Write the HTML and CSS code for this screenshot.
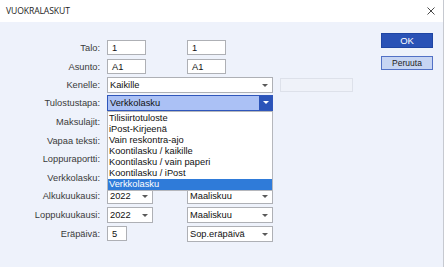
FILE: index.html
```html
<!DOCTYPE html>
<html lang="fi">
<head>
  <meta charset="UTF-8" />
  <title>Vuokralaskut</title>
  <link rel="stylesheet" href="styles.css">
</head>
<body>
  <div class="window">
    <header class="titlebar">
      <span class="title">VUOKRALASKUT</span>
      <svg class="close" viewBox="0 0 8 8"><path d="M0.5 0.5L7.5 7.5M7.5 0.5L0.5 7.5"/></svg>
    </header>

    <div class="content">
      <form class="form">
        <label class="lbl r1">Talo:</label>
        <div class="field input w-short col-a r1">1</div>
        <div class="field input w-short col-b r1">1</div>

        <label class="lbl r2">Asunto:</label>
        <div class="field input w-short col-a r2">A1</div>
        <div class="field input w-short col-b r2">A1</div>

        <label class="lbl r3">Kenelle:</label>
        <div class="field select col-wide r3">Kaikille<span class="arrow"></span></div>
        <div class="field disabled col-c r3"></div>

        <label class="lbl r4">Tulostustapa:</label>
        <div class="field select active col-wide r4">Verkkolasku<span class="arrow-box"><span class="arrow"></span></span>
          <ul class="dropdown">
            <li>Tilisiirtotuloste</li>
            <li>iPost-Kirjeenä</li>
            <li>Vain reskontra-ajo</li>
            <li>Koontilasku / kaikille</li>
            <li>Koontilasku / vain paperi</li>
            <li>Koontilasku / iPost</li>
            <li class="selected">Verkkolasku</li>
          </ul>
        </div>

        <label class="lbl r5">Maksulajit:</label>
        <label class="lbl r6">Vapaa teksti:</label>
        <label class="lbl r7">Loppuraportti:</label>
        <label class="lbl r8">Verkkolasku:</label>

        <label class="lbl r9">Alkukuukausi:</label>
        <div class="field select w-year col-a r9">2022<span class="arrow"></span></div>
        <div class="field select col-b r9">Maaliskuu<span class="arrow"></span></div>

        <label class="lbl r10">Loppukuukausi:</label>
        <div class="field select w-year col-a r10">2022<span class="arrow"></span></div>
        <div class="field select col-b r10">Maaliskuu<span class="arrow"></span></div>

        <label class="lbl r11">Eräpäivä:</label>
        <div class="field input w-day col-a r11">5</div>
        <div class="field select col-b r11">Sop.eräpäivä<span class="arrow"></span></div>
      </form>

      <div class="actions">
        <button class="btn btn-ok">OK</button>
        <button class="btn btn-cancel">Peruuta</button>
      </div>
    </div>
  </div>
</body>
</html>
```

FILE: styles.css
```css
* { margin: 0; padding: 0; box-sizing: border-box; }
body {
  font-family: "Liberation Sans", Arial, sans-serif;
  font-size: 9.3px;
  color: #333;
  background: #eef2fb;
}
.window {
  width: 444px;
  height: 267px;
  background: #eef2fb;
  border-right: 1px solid #c6c9d0;
  display: flex;
  flex-direction: column;
}
.titlebar {
  height: 22px;
  background: #fff;
  display: flex;
  align-items: center;
  justify-content: space-between;
  padding: 0 8px 1px 6px;
}
.title {
  font-family: "Open Sans", "Noto Sans", sans-serif;
  font-size: 8.6px;
  color: #222;
  letter-spacing: -0.1px;
}
.close {
  width: 8px;
  height: 8px;
  stroke: #333;
  stroke-width: 0.9;
  fill: none;
}
.content {
  flex: 1;
  display: flex;
}
.form {
  display: grid;
  grid-template-columns: 100px 7px 80px 86px 7px 73px;
  grid-template-rows: 19px 19px 18px 18px 19px 19px 18px 19px 18px 19px 19px;
  margin-top: 16px;
  align-content: start;
}
.r1 { grid-row: 1; } .r2 { grid-row: 2; } .r3 { grid-row: 3; }
.r4 { grid-row: 4; } .r5 { grid-row: 5; } .r6 { grid-row: 6; }
.r7 { grid-row: 7; } .r8 { grid-row: 8; } .r9 { grid-row: 9; }
.r10 { grid-row: 10; } .r11 { grid-row: 11; }
.lbl {
  grid-column: 1;
  align-self: center;
  text-align: right;
  color: #3a3a3a;
}
.col-a { grid-column: 3; }
.col-b { grid-column: 4; }
.col-wide { grid-column: 3 / span 2; }
.col-c { grid-column: 6; }

.field {
  align-self: center;
  background: #fff;
  border: 1px solid #aeb0b5;
  color: #111;
  display: flex;
  align-items: center;
  position: relative;
  white-space: nowrap;
}
.input { height: 15px; padding-left: 4px; }
.select { height: 16px; padding-left: 2px; }
.w-short { width: 39px; }
.w-year { width: 46px; }
.w-day { width: 20px; }
.disabled {
  height: 14px;
  background: #eff2f9;
  border-color: #dde1ea;
}
.arrow {
  position: absolute;
  right: 4px;
  top: 6px;
  width: 0;
  height: 0;
  border-left: 3px solid transparent;
  border-right: 3px solid transparent;
  border-top: 3px solid #5a5a5a;
}
.select.active {
  background: #abc1f5;
  border-color: #2f56bb;
}
.arrow-box {
  position: absolute;
  right: 0;
  top: 0;
  width: 13px;
  height: 14px;
  background: #2b54b9;
}
.arrow-box .arrow {
  right: 3px;
  top: 5px;
  border-top-color: #fff;
}
.dropdown {
  list-style: none;
  position: absolute;
  z-index: 2;
  left: -1px;
  right: -1px;
  top: 15px;
  background: #fff;
  border: 1px solid #b5b7bc;
  padding-top: 1px;
}
.dropdown li {
  height: 11px;
  line-height: 11px;
  padding-left: 1px;
  color: #111;
}
.dropdown li.selected {
  background: #2f7bd9;
  color: #fff;
}
.actions {
  margin-left: auto;
  margin-right: 10px;
  padding-top: 11px;
  display: flex;
  flex-direction: column;
  gap: 8px;
}
.btn {
  width: 52px;
  font-family: "Liberation Sans", Arial, sans-serif;
  cursor: pointer;
}
.btn-ok {
  height: 15px;
  background: #2a52b6;
  border: 1px solid #1f45a3;
  color: #fff;
  font-size: 9.5px;
}
.btn-cancel {
  height: 14px;
  background: #c7d5f3;
  border: 1px solid #5271c6;
  color: #222;
  font-size: 8.5px;
}
```
